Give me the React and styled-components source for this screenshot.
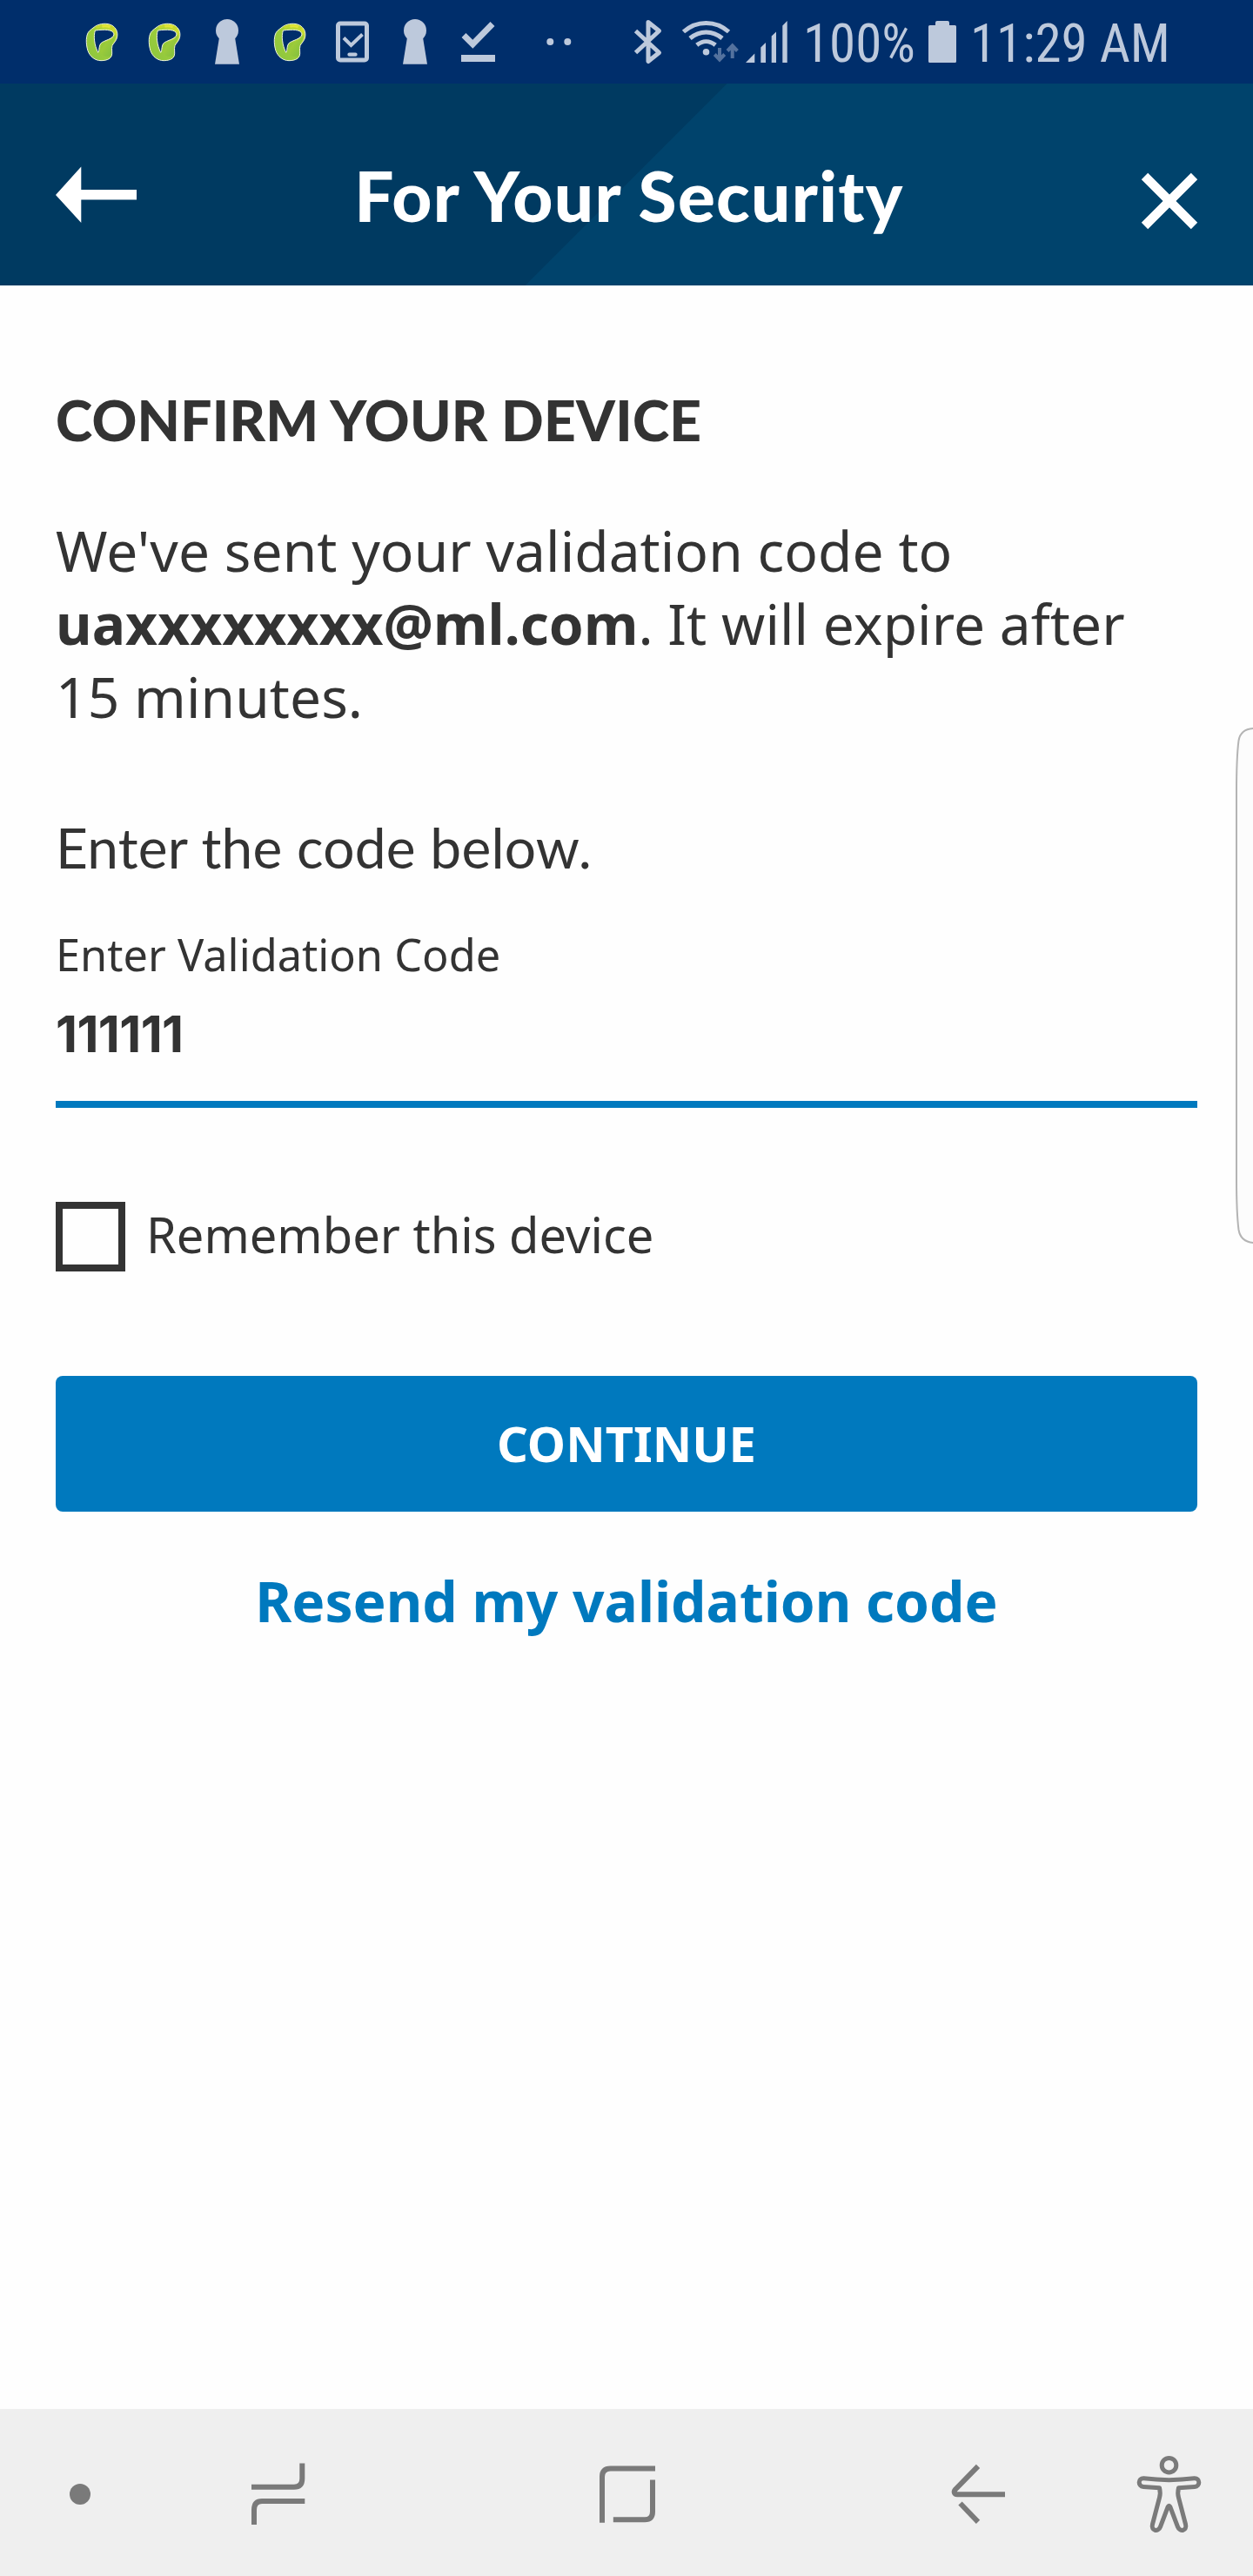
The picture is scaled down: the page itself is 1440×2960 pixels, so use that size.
import React from "react";
import styled, { createGlobalStyle } from "styled-components";

const GlobalStyle = createGlobalStyle`
  *, *::before, *::after { box-sizing: border-box; }
  body {
    margin: 0;
    background: #fefefe;
    color: #333;
    font-family: "Noto Sans", sans-serif;
  }
  h1, h2, p { margin: 0; }
  button { border: 0; padding: 0; background: none; font: inherit; color: inherit; }
`;

const brandFont = `Lato, "Noto Sans", sans-serif`;
const blue = "#0079be";

const Screen = styled.div`
  position: relative;
  display: flex;
  flex-direction: column;
  width: 1440px;
  height: 2960px;
  overflow: hidden;
`;

/* status bar */
const StatusBar = styled.div`
  flex: none;
  display: flex;
  height: 96px;
  padding-left: 81px;
  background: #002e6b;
  color: #bdc9dc;
`;

const Icon = styled.svg`
  display: block;
  flex: none;
  width: ${(p) => p.$w}px;
  height: ${(p) => p.$h || 96}px;
  margin-left: ${(p) => p.$gap || 0}px;
  overflow: visible;
`;

const StatusText = styled.span`
  flex: none;
  width: ${(p) => p.$w}px;
  margin-left: ${(p) => p.$gap}px;
  line-height: 101px;
  font-family: "Roboto Condensed", Roboto, sans-serif;
  font-size: 61px;
  white-space: nowrap;
`;

/* header */
const Header = styled.header`
  flex: none;
  display: flex;
  justify-content: space-between;
  height: 232px;
  padding: 0 64px;
  background: linear-gradient(
    135deg,
    #003a61 0,
    #003a61 590.4px,
    #00436c 591.4px,
    #00436c 100%
  );
  color: #fff;
`;

const HeaderButton = styled.button`
  width: 94px;
  height: 232px;
`;

const Title = styled.h1`
  padding: 78px 0 0 6px;
  font: 900 80px/100px ${brandFont};
  letter-spacing: 1.3px;
  white-space: nowrap;
`;

/* form */
const Main = styled.main`
  flex: 1;
  padding: 115px 64px 0;
`;

const Heading = styled.h2`
  font: 900 64px/80px ${brandFont};
  letter-spacing: 0.25px;
`;

const Message = styled.p`
  margin-top: 68px;
  font-size: 64px;
  line-height: 84px;
  letter-spacing: 0.07px;
`;

const Prompt = styled.p`
  margin-top: 91px;
  font: 400 64px/80px ${brandFont};
  letter-spacing: 0.2px;
`;

const FieldLabel = styled.label`
  display: block;
  margin-top: 48px;
  font-size: 50.5px;
  line-height: 70px;
`;

const CodeField = styled.div`
  height: 141px;
  padding-top: 16px;
  border-bottom: 8px solid ${blue};
  font: 700 58px/80px Inter, sans-serif;
  letter-spacing: -0.6px;
`;

const CheckRow = styled.div`
  display: flex;
  align-items: flex-start;
  gap: 24px;
  height: 80px;
  margin-top: 108px;
  font-size: 56px;
  line-height: 75px;
`;

const CheckBox = styled.span`
  width: 80px;
  height: 80px;
  border: 8px solid #333;
`;

const ContinueButton = styled.button`
  display: block;
  width: 100%;
  height: 156px;
  margin-top: 120px;
  padding-bottom: 2px;
  border-radius: 8px;
  background: ${blue};
  color: #fff;
  font-size: 56px;
  font-weight: 700;
`;

const ResendLink = styled.button`
  display: block;
  margin: 61px auto 0;
  color: ${blue};
  font-size: 64px;
  font-weight: 700;
  line-height: 84px;
`;

const EdgeHandle = styled.svg`
  position: absolute;
  top: 830px;
  right: 0;
  width: 24px;
  height: 604px;
`;

/* navigation bar */
const NavBar = styled.nav`
  flex: none;
  display: flex;
  height: 192px;
  padding-left: 72px;
  background: #efefef;
`;

const PepperIcon = () => (
  <Icon $w={72} viewBox="63 0 216 288">
    <defs>
      <linearGradient id="leaf" x1="0" y1="1" x2="1" y2="0">
        <stop offset="0" stopColor="#8cc63f" />
        <stop offset="0.5" stopColor="#9bcc3b" />
        <stop offset="1" stopColor="#dde32f" />
      </linearGradient>
      <linearGradient id="stalk" x1="0" y1="0" x2="1" y2="1">
        <stop offset="0" stopColor="#7ab83c" />
        <stop offset="0.4" stopColor="#9ccb3a" />
        <stop offset="1" stopColor="#7cbd42" />
      </linearGradient>
    </defs>
    <path
      fillRule="evenodd"
      fill="url(#leaf)"
      stroke="#f1f6dc"
      strokeWidth="3"
      d="M148 91C165 80 190 79 205 87C220 95 227 110 224 127C222 140 212 148 207 157C203 170 209 184 204 194C199 205 183 209 168 209C148 209 130 195 123 175C115 150 116 120 127 108C134 101 140 97 148 91ZM148 105C142 125 145 155 158 181C163 178 160 161 167 150C178 138 212 136 213 117C209 101 180 101 148 105Z"
    />
    <path
      fill="url(#stalk)"
      d="M167 182C163 162 172 151 186 145C200 139 213 132 217 118C223 134 209 144 205 157C201 170 207 184 202 191C191 199 174 196 167 182Z"
    />
    <path
      d="M152 96C166 86 195 86 212 98"
      fill="none"
      stroke="#c4d72f"
      strokeWidth="9"
    />
    <path d="M172 91C181 89 192 90 200 93" fill="none" stroke="#e3e437" strokeWidth="8" />
  </Icon>
);

const KeyholeIcon = () => (
  <Icon $w={72} viewBox="0 0 72 96" fill="currentColor">
    <circle cx="36" cy="35" r="13" />
    <path d="M27.500 40H44.500L50 73.700H22Z" />
  </Icon>
);

const TabletCheckIcon = () => (
  <Icon $w={72} viewBox="369 0 72 96" fill="none" stroke="currentColor">
    <rect x="388.500" y="27" width="33" height="42" rx="2.500" strokeWidth="5" />
    <path d="M395 43.500L403.500 52L416.500 39.500" strokeWidth="4" />
    <path d="M401.500 62.700H408.500" strokeWidth="4.300" strokeLinecap="round" />
  </Icon>
);

const DoneIcon = () => (
  <Icon $w={72} viewBox="513 0 72 96" fill="none" stroke="currentColor">
    <path d="M533 40.500L543.300 50.700L566 27.500" strokeWidth="7" />
    <path d="M530 67H569" strokeWidth="8" />
  </Icon>
);

const DotsIcon = () => (
  <Icon $w={32} $gap={43} viewBox="628 0 32 96" fill="currentColor">
    <circle cx="632.300" cy="48" r="4" />
    <circle cx="652.300" cy="48" r="4" />
  </Icon>
);

const BluetoothIcon = () => (
  <Icon
    $w={32}
    $gap={68}
    viewBox="728 0 32 96"
    fill="none"
    stroke="currentColor"
    strokeWidth="5"
    strokeLinejoin="round"
  >
    <path d="M730.500 35.500L757.500 60.500L745 70.500V25.500L757.500 35.500L730.500 60.500" />
  </Icon>
);

const WifiIcon = () => (
  <Icon $w={65} $gap={24} viewBox="784 0 65 96" fill="none" stroke="currentColor" strokeWidth="5">
    <path d="M785.500 36.500C800.500 23 822.500 23 837.500 36.500" />
    <path d="M793 44C804 34.500 819 34.500 830 44" />
    <path d="M800.800 51.800C807.500 46.300 815.500 46.300 822.200 51.800" />
    <circle cx="811.500" cy="59.700" r="3.800" fill="currentColor" stroke="none" />
    <g stroke="#54729e" strokeWidth="4">
      <path d="M827 55V68M821.300 62.500L827 68.500L832.700 62.500" />
      <path d="M841.700 67V54M836 58.500L841.700 52.500L847.400 58.500" />
    </g>
  </Icon>
);

const SignalIcon = () => (
  <Icon $w={48} $gap={8} viewBox="857 0 48 96" fill="currentColor">
    <path d="M857 72L867.300 61.500V72ZM874.300 72V54.500L880 49V72ZM886.700 72V41.500L892 36.500V72ZM899.300 72V29.500L904.700 24V72Z" />
  </Icon>
);

const BatteryIcon = () => (
  <Icon $w={32} viewBox="1067 0 32 96" fill="currentColor">
    <path d="M1068.500 29H1075V26Q1075 24 1077 24H1089Q1091 24 1091 26V29H1097.500Q1099 29 1099 30.500V70.500Q1099 72 1097.500 72H1068.500Q1067 72 1067 70.500V30.500Q1067 29 1068.500 29Z" />
  </Icon>
);

export default function App() {
  return (
    <Screen>
      <GlobalStyle />
      <StatusBar>
        <PepperIcon />
        <PepperIcon />
        <KeyholeIcon />
        <PepperIcon />
        <TabletCheckIcon />
        <KeyholeIcon />
        <DoneIcon />
        <DotsIcon />
        <BluetoothIcon />
        <WifiIcon />
        <SignalIcon />
        <StatusText $w={144} $gap={18}>100%</StatusText>
        <BatteryIcon />
        <StatusText $w={240} $gap={16}>11:29 AM</StatusText>
      </StatusBar>

      <Header>
        <HeaderButton aria-label="Back">
          <Icon $w={94} $h={232} viewBox="64 96 94 232" fill="#fff">
            <path d="M64 224L93.300 191.500V218H157V229.500H93.300V256Z" />
          </Icon>
        </HeaderButton>
        <Title>For Your Security</Title>
        <HeaderButton aria-label="Close">
          <Icon
            $w={94}
            $h={232}
            viewBox="1282 96 94 232"
            fill="none"
            stroke="#fff"
            strokeWidth="10.500"
          >
            <path d="M1315.500 202.500L1372.500 259.500M1372.500 202.500L1315.500 259.500" />
          </Icon>
        </HeaderButton>
      </Header>

      <Main>
        <Heading>CONFIRM YOUR DEVICE</Heading>
        <Message>
          We've sent your validation code to
          <br />
          <b>uaxxxxxxxx@ml.com</b>. It will expire after
          <br />
          15 minutes.
        </Message>
        <Prompt>Enter the code below.</Prompt>
        <FieldLabel>Enter Validation Code</FieldLabel>
        <CodeField>111111</CodeField>
        <CheckRow>
          <CheckBox />
          <span>Remember this device</span>
        </CheckRow>
        <ContinueButton>CONTINUE</ContinueButton>
        <ResendLink>Resend my validation code</ResendLink>
      </Main>

      <NavBar>
        <Icon $w={40} $h={192} viewBox="72 2768 40 192" fill="#7a7a7a">
          <circle cx="92" cy="2866" r="12" />
        </Icon>
        <Icon
          $w={62}
          $h={192}
          $gap={177}
          viewBox="289 2768 62 192"
          fill="none"
          stroke="#7a7a7a"
          strokeWidth="6"
        >
          <path d="M289 2857.800H338Q347.300 2857.800 347.300 2848V2830.500" />
          <path d="M350.300 2874H301Q292 2874 292 2884V2901" />
        </Icon>
        <Icon
          $w={64}
          $h={192}
          $gap={338}
          viewBox="689 2768 64 192"
          fill="none"
          stroke="#7a7a7a"
          strokeWidth="6"
        >
          <path d="M692 2898.700V2846Q692 2836.500 701.500 2836.500H753" />
          <path d="M750 2849.500V2886Q750 2895.300 741 2895.300H704.800" />
        </Icon>
        <Icon
          $w={62}
          $h={192}
          $gap={341}
          viewBox="1094 2768 62 192"
          fill="none"
          stroke="#7a7a7a"
          strokeWidth="6"
        >
          <path d="M1124 2833.800L1098 2860.500C1095.500 2863.500 1096.800 2866.200 1100 2866.200H1155" />
          <path d="M1103.500 2876.500L1124 2897.800" />
        </Icon>
        <Icon
          $w={74}
          $h={192}
          $gap={151}
          viewBox="1307 2768 74 192"
          fill="none"
          stroke="#7a7a7a"
          strokeWidth="5"
          strokeLinejoin="round"
        >
          <circle cx="1343.500" cy="2832.700" r="8.300" />
          <path d="M1343.500 2849.700Q1358 2849.300 1372.500 2847.800C1379.500 2847.300 1379.500 2857 1373 2857.500L1354.500 2858.700Q1353 2865 1354.500 2870L1362.500 2900.500C1364.500 2908 1356 2910 1353.500 2903.500L1344.800 2880.500Q1343.500 2878 1342.200 2880.500L1333.500 2903.500C1331 2910 1322.500 2908 1324.500 2900.500L1332.500 2870Q1334 2865 1332.500 2858.700L1314 2857.500C1307.500 2857 1307.500 2847.300 1314.500 2847.800Q1329 2849.300 1343.500 2849.700Z" />
        </Icon>
      </NavBar>

      <EdgeHandle viewBox="1416 830 24 604" fill="#fcfcfc" stroke="#b4b4b4" strokeWidth="2">
        <path d="M1441 837C1431 837.500 1425 842 1423.500 851Q1421 870 1421 910V1354Q1421 1394 1423.500 1413C1425 1422 1431 1427.500 1441 1428" />
      </EdgeHandle>
    </Screen>
  );
}
